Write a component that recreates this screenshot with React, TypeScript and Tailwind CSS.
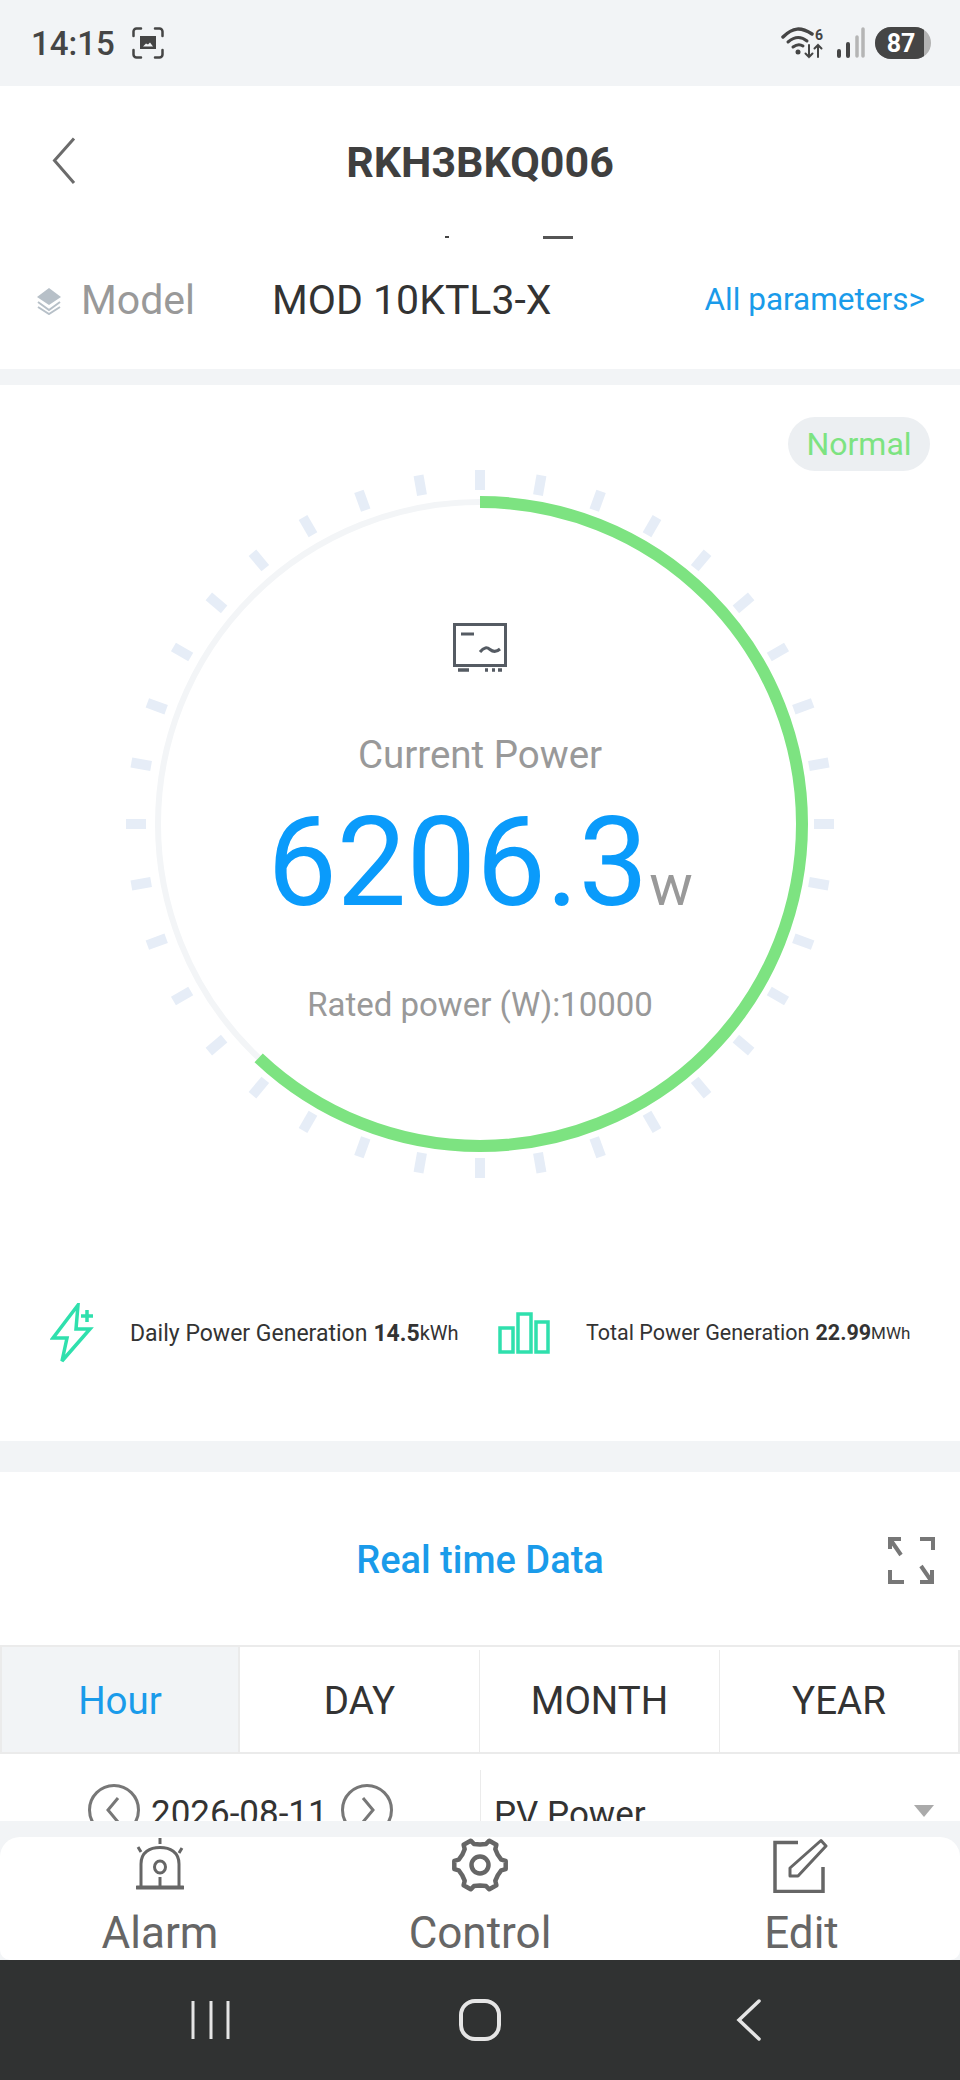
const TICKS = Array.from({ length: 36 }, (_, i) => i * 10);

const GEAR_PATH = (() => {
  const pts: string[] = [];
  for (let i = 0; i < 6; i++) {
    const a = (i * 60 * Math.PI) / 180;
    for (const [off, r] of [
      [-30, 20.5],
      [-14, 22],
      [-9, 26],
      [9, 26],
      [14, 22],
    ]) {
      const t = a + (off * Math.PI) / 180;
      pts.push(`${(28 + r * Math.cos(t)).toFixed(1)},${(28 + r * Math.sin(t)).toFixed(1)}`);
    }
  }
  return `M${pts.join(" L")} Z`;
})();

function StatusBar() {
  return (
    <div className="flex h-[86px] items-center justify-between bg-[#f2f4f6] pl-[31px] pr-[29px]">
      <div className="flex items-center gap-[17px]">
        <span className="text-[33px] font-medium leading-none text-[#454545]">14:15</span>
        <svg width="32" height="32" viewBox="0 0 32 32" fill="none" stroke="#454545" strokeWidth="2.500" strokeLinecap="round">
          <path d="M1.500 9V4.500a3 3 0 0 1 3-3H9M23 1.500h4.500a3 3 0 0 1 3 3V9M30.500 23v4.500a3 3 0 0 1-3 3H23M9 30.500H4.500a3 3 0 0 1-3-3V23" />
          <path d="M8 9h16v13H8z" fill="#454545" stroke="none" />
          <path d="M11 19.500l3-3 2 1 2-2 3 4z" fill="#f2f4f6" stroke="none" />
        </svg>
      </div>
      <div className="flex items-center">
        <svg width="46" height="34" viewBox="0 0 46 34" fill="none" stroke="#454545" strokeLinecap="round">
          <path d="M2 11C12 1 20 1 31 8" strokeWidth="3.500" />
          <path d="M7 16c7-6 13-6 19-1" strokeWidth="3" />
          <path d="M12 21c4-3 7-3 10-1" strokeWidth="3" />
          <circle cx="17" cy="26" r="2.500" fill="#454545" stroke="none" />
          <path d="M28 19v12m-3.500-3.500L28 31l3.500-3.500M37 31V19m-3.500 3.500L37 19l3.500 3.500" strokeWidth="2" />
          <text x="34" y="14" fontSize="14" fontWeight="700" fill="#454545" stroke="none" fontFamily="Roboto, sans-serif">6</text>
        </svg>
        <svg className="ml-[8px]" width="30" height="32" viewBox="0 0 30 32" fill="none" strokeWidth="4" strokeLinecap="round">
          <path d="M4 24v5M13 17v12" stroke="#454545" />
          <path d="M22 10v19M28 2v27" stroke="#b5b5b5" strokeWidth="3.500" />
        </svg>
        <div className="ml-[10px] flex h-[32px] w-[56px] overflow-hidden rounded-full bg-[#b3b3b3]">
          <div className="flex w-[49px] items-center justify-center bg-[#454545] pl-[3px] text-[25px] font-bold leading-none text-white">87</div>
        </div>
      </div>
    </div>
  );
}

function Header() {
  return (
    <div className="bg-white">
      <div className="relative flex h-[150px] items-center justify-center pt-[2px]">
        <svg className="absolute left-[51px] top-[50px]" width="26" height="50" viewBox="0 0 26 50" fill="none" stroke="#6b6b6b" strokeWidth="3">
          <path d="M23 2.500 3.500 24.500 23 47" />
        </svg>
        <span className="text-[43px] font-bold leading-none text-[#3f3f3f]">RKH3BKQ006</span>
      </div>
      <div className="flex h-[3px] items-start pl-[445px]">
        <div className="h-[2px] w-[4px] bg-[#444]" />
        <div className="ml-[94px] h-[3px] w-[30px] bg-[#555]" />
      </div>
      <div className="flex h-[130px] items-center pb-[7px] pl-[36px] pr-[35px]">
        <svg width="26" height="28" viewBox="0 0 26 28" fill="none">
          <path d="M13 1 25 10 13 18 1 10z" fill="#b7c0c8" />
          <path d="M2 15l11 8 11-8M2 20l11 7 11-7" stroke="#b7c0c8" strokeWidth="2" />
        </svg>
        <span className="ml-[19px] w-[191px] text-[41px] leading-none text-[#999]">Model</span>
        <span className="text-[41px] leading-none text-[#333]">MOD 10KTL3-X</span>
        <span className="mb-[2px] ml-auto text-[31.500px] leading-none text-[#1a9bea]">All parameters&gt;</span>
      </div>
    </div>
  );
}

function Gauge() {
  return (
    <div className="mx-auto -mt-[3px] grid h-[712px] w-[712px]">
      <svg className="[grid-area:1/1]" width="712" height="712" viewBox="0 0 712 712" fill="none">
        {TICKS.map((deg) => (
          <rect key={deg} x="351" y="2" width="10" height="20" fill="#e6edf7" transform={`rotate(${deg} 356 356)`} />
        ))}
        <circle cx="356" cy="356" r="322" stroke="#f3f5f7" strokeWidth="6" />
        <circle
          cx="356"
          cy="356"
          r="322"
          stroke="#7de381"
          strokeWidth="12"
          pathLength="100"
          strokeDasharray="62.063 100"
          transform="rotate(-90 356 356)"
        />
      </svg>
      <div className="flex flex-col items-center pt-[155px] [grid-area:1/1]">
        <svg width="54" height="49" viewBox="0 0 54 49" fill="none" stroke="#555b63">
          <path d="M1.500 1.500h51v41h-51z" strokeWidth="3" />
          <path d="M8 11h13" strokeWidth="3" />
          <path d="M27 29c4-5 7-5 10-2.500s6 3 10-.5" strokeWidth="3" />
          <path d="M5 47h11M32 47h3M39 47h3M45 47h4" strokeWidth="3.500" />
        </svg>
        <div className="mt-[59px] text-[38.500px] leading-[48px] text-[#999]">Current Power</div>
        <div className="mt-[19px] flex items-baseline">
          <span className="text-[124px] leading-[130px] text-[#0a9bfb]">6206.3</span>
          <span className="ml-[1px] text-[58px] leading-none text-[#999]">w</span>
        </div>
        <div className="mt-[55px] text-[33px] leading-[44px] text-[#999]">Rated power (W):10000</div>
      </div>
    </div>
  );
}

function Stats() {
  return (
    <div className="mt-[123px] flex h-[60px] items-center pl-[50px] text-[23px] leading-none text-[#333]">
      <div className="flex w-[448px] items-center">
        <svg width="44" height="60" viewBox="0 0 44 60" fill="none" stroke="#2fe0ad" strokeWidth="3.500">
          <path d="M28 2 3 35h14l-5 23 28-32H26z" />
          <path d="M37 7v12M31 13h12" />
        </svg>
        <span className="ml-[36px]">Daily Power Generation</span>
        <span className="ml-[6px] font-bold">14.5</span>
        <span className="text-[20px]">kWh</span>
      </div>
      <div className="flex items-center">
        <svg width="52" height="42" viewBox="0 0 52 42" fill="none" stroke="#2fe0ad" strokeWidth="3.500">
          <path d="M2 16h13v24H2zM20 2h13v38H20zM38 10h12v30H38z" />
        </svg>
        <span className="ml-[36px] text-[21.500px]">Total Power Generation</span>
        <span className="ml-[6px] text-[21.500px] font-bold">22.99</span>
        <span className="text-[17px]">MWh</span>
      </div>
    </div>
  );
}

function Chart() {
  return (
    <div className="bg-white">
      <div className="grid h-[173px] grid-cols-[1fr_auto_1fr] items-center px-[25px] pt-[3px]">
        <div />
        <span className="text-[38px] font-medium leading-none text-[#1a9bea]">Real time Data</span>
        <svg className="justify-self-end" width="48" height="48" viewBox="0 0 48 48" fill="none" stroke="#777" strokeWidth="4">
          <path d="M3 13V3h11M3 3l11 16M33 3h13v11M3 34v12h14M45 34v12H33M45 46 34 30" />
        </svg>
      </div>
      <div className="grid h-[109px] grid-cols-4 border-y-2 border-[#ebebeb] pt-[3px] text-[38.500px] leading-none text-[#333]">
        <div className="-mt-[3px] flex items-center justify-center border-x-2 border-[#ebebeb] bg-[#f2f4f6] pt-[3px] text-[#1a9bea]">Hour</div>
        <div className="flex items-center justify-center border-r border-[#ebebeb]">DAY</div>
        <div className="flex items-center justify-center border-r border-[#ebebeb]">MONTH</div>
        <div className="flex items-center justify-center border-r-2 border-[#ebebeb]">YEAR</div>
      </div>
      <div className="flex h-[67px] overflow-hidden text-[35px] leading-none text-[#333]">
        <div className="flex w-[480px] items-start gap-[11px] pl-[88px] pt-[30px]">
          <svg className="shrink-0" width="52" height="52" viewBox="0 0 52 52" fill="none" stroke="#777" strokeWidth="3">
            <circle cx="26" cy="26" r="24.500" />
            <path d="M30 14 20 26l10 12" />
          </svg>
          <span className="whitespace-nowrap pt-[12px]">2026-08-11</span>
          <svg className="ml-[2px] shrink-0" width="52" height="52" viewBox="0 0 52 52" fill="none" stroke="#777" strokeWidth="3">
            <circle cx="26" cy="26" r="24.500" />
            <path d="m22 14 10 12-10 12" />
          </svg>
        </div>
        <div className="mt-[16px] flex flex-1 items-start justify-between border-l border-[#ebebeb] pl-[13px] pr-[26px]">
          <span className="pt-[27px]">PV Power</span>
          <svg className="mt-[35px]" width="20" height="12" viewBox="0 0 20 12">
            <path d="M0 0h20L10 12z" fill="#aaa" />
          </svg>
        </div>
      </div>
    </div>
  );
}

function BottomBar() {
  return (
    <div className="bg-[#f2f4f6] pt-[16px]">
      <div className="grid h-[123px] grid-cols-3 overflow-hidden rounded-t-[20px] rounded-b-[10px] bg-white text-[44px] leading-none text-[#666]">
        <div className="flex flex-col items-center">
          <svg className="mt-[1px]" width="48" height="52" viewBox="0 0 48 52" fill="none" stroke="#666">
            <path d="M5 49V26C5 14 14 9.500 24 9.500S43 14 43 26v23" strokeWidth="3" />
            <path d="M1 49.500h46" strokeWidth="4" strokeLinecap="round" />
            <ellipse cx="24" cy="29" rx="5.500" ry="6" strokeWidth="3" />
            <path d="M24 39v10M24 0v6M2 9l3 5M46 10l-3 5" strokeWidth="3" />
          </svg>
          <span className="mt-[21px]">Alarm</span>
        </div>
        <div className="flex flex-col items-center">
          <svg width="56" height="56" viewBox="0 0 56 56" fill="none" stroke="#666" strokeWidth="4.500" strokeLinejoin="round">
            <path d={GEAR_PATH} />
            <circle cx="28" cy="28" r="8.500" />
          </svg>
          <span className="mt-[18px]">Control</span>
        </div>
        <div className="flex flex-col items-center">
          <svg width="56" height="56" viewBox="0 0 56 56" fill="none" stroke="#666">
            <path d="M26 5.500H3v49h48V30" strokeWidth="3.500" />
            <path d="M49 3.500 18 31v8h8L54 9z" strokeWidth="3" strokeLinejoin="round" />
          </svg>
          <span className="ml-[3px] mt-[18px]">Edit</span>
        </div>
      </div>
    </div>
  );
}

function NavBar() {
  return (
    <div className="grid h-[120px] grid-cols-3 items-center bg-[#303232] px-[76px]">
      <svg className="justify-self-center" width="40" height="40" viewBox="0 0 40 40" stroke="#e5e5e5" strokeWidth="3">
        <path d="M2 1v38M20 1v38M37 1v38" />
      </svg>
      <svg className="justify-self-center" width="42" height="42" viewBox="0 0 42 42" fill="none" stroke="#e5e5e5" strokeWidth="4">
        <rect x="2" y="2" width="38" height="38" rx="14" />
      </svg>
      <svg className="justify-self-center" width="26" height="42" viewBox="0 0 26 42" fill="none" stroke="#e5e5e5" strokeWidth="3.500" strokeLinecap="round">
        <path d="M23 2 3 21l20 19" />
      </svg>
    </div>
  );
}

export default function App() {
  return (
    <div className="h-[2080px] w-[960px] overflow-hidden bg-white font-[Roboto,sans-serif]">
      <StatusBar />
      <Header />
      <div className="h-[16px] bg-[#f2f4f6]" />
      <div className="h-[1056px] bg-white">
        <div className="flex justify-end pr-[30px] pt-[32px]">
          <span className="flex h-[54px] w-[142px] items-center justify-center rounded-full bg-[#eceff2] text-[32px] leading-none text-[#7de381]">Normal</span>
        </div>
        <Gauge />
        <Stats />
      </div>
      <div className="h-[31px] bg-[#f2f4f6]" />
      <Chart />
      <BottomBar />
      <NavBar />
    </div>
  );
}
